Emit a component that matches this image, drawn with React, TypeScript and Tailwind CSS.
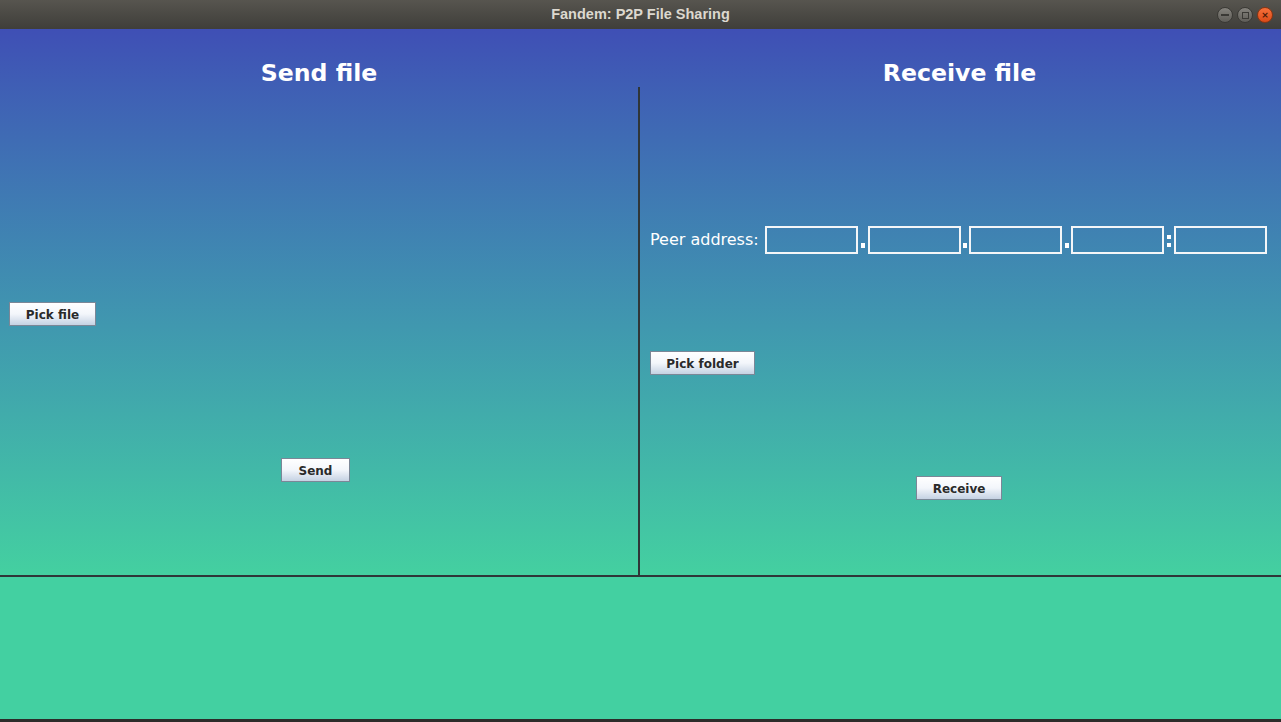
import React from "react";

function SwingButton({ label, className }: { label: string; className?: string }) {
    return (
        <button
            className={
                "h-[24px] pt-[2px] border border-[#7b8797] bg-gradient-to-b from-white via-[#f3f6fb] to-[#c5d2e3] text-[12px] font-bold text-[#2a2a2a] leading-none " +
                (className ?? "")
            }
        >
            {label}
        </button>
    );
}

function Field() {
    return <div className="w-[93px] h-[28px] border-2 border-[#f4f6f8] shrink-0" />;
}

function Dot({ w }: { w: string }) {
    return (
        <div className={"h-[28px] flex items-end justify-center pb-[6px] shrink-0 " + w}>
            <div className="w-[4px] h-[5px] bg-white" />
        </div>
    );
}

function Colon() {
    return (
        <div className="w-[10px] h-[28px] flex flex-col items-center justify-end gap-[4px] pb-[7px] shrink-0">
            <div className="w-[4px] h-[4px] bg-white" />
            <div className="w-[4px] h-[4px] bg-white" />
        </div>
    );
}

export default function App() {
    return (
        <div className="w-[1281px] h-[722px] flex flex-col overflow-hidden font-['DejaVu_Sans',sans-serif]">
            {/* Window title bar */}
            <div className="h-[29px] shrink-0 relative flex items-center justify-center bg-gradient-to-b from-[#57554f] to-[#3f3e3a]">
                <span className="text-[14.5px] font-bold text-[#dcd8cf] font-['Liberation_Sans',sans-serif]">
                    Fandem: P2P File Sharing
                </span>
                <div className="absolute right-[8px] top-[7px] flex gap-[4px]">
                    <div className="w-[16px] h-[16px] rounded-full bg-gradient-to-b from-[#85837d] to-[#5f5d58] border border-[#3a3935] flex items-center justify-center">
                        <div className="w-[8px] h-[2px] bg-[#3a3935]" />
                    </div>
                    <div className="w-[16px] h-[16px] rounded-full bg-gradient-to-b from-[#85837d] to-[#5f5d58] border border-[#3a3935] flex items-center justify-center">
                        <div className="w-[7px] h-[7px] border border-[#3a3935]" />
                    </div>
                    <div className="w-[16px] h-[16px] rounded-full bg-gradient-to-b from-[#f6703a] to-[#dc4a16] border border-[#8a3512] flex items-center justify-center text-[9px] leading-none text-[#4a1a08] font-bold">
                        ×
                    </div>
                </div>
            </div>

            {/* Main panel */}
            <div className="h-[546px] shrink-0 flex flex-col bg-gradient-to-b from-[#3f4fb5] to-[#44d0a0]">
                <div className="h-[58px] shrink-0 flex pt-[31px]">
                    <h2 className="w-[638px] text-center text-[23.6px] font-bold text-white leading-[27px]">Send file</h2>
                    <h2 className="flex-1 text-center text-[23.6px] font-bold text-white leading-[27px]">Receive file</h2>
                </div>
                <div className="flex-1 flex">
                    {/* Send side */}
                    <div className="w-[638px] flex flex-col items-start pt-[215px] pl-[9px]">
                        <SwingButton label="Pick file" className="w-[87px]" />
                        <SwingButton label="Send" className="w-[69px] mt-[132px] ml-[272px]" />
                    </div>
                    <div className="w-[2px] bg-[#2f3638]" />
                    {/* Receive side */}
                    <div className="flex-1 flex flex-col items-start pt-[139px] pl-[10px]">
                        <div className="flex items-center">
                            <span className="w-[115px] text-[16px] text-white leading-none">Peer address:</span>
                            <Field />
                            <Dot w="w-[10px]" />
                            <Field />
                            <Dot w="w-[8px]" />
                            <Field />
                            <Dot w="w-[9px]" />
                            <Field />
                            <Colon />
                            <Field />
                        </div>
                        <SwingButton label="Pick folder" className="w-[105px] mt-[97px]" />
                        <SwingButton label="Receive" className="w-[86px] mt-[101px] ml-[266px]" />
                    </div>
                </div>
            </div>

            <div className="h-[2px] shrink-0 bg-[#2f3638]" />

            {/* Bottom panel */}
            <div className="h-[142px] shrink-0 bg-[#43d0a1]" />
            <div className="h-[3px] shrink-0 bg-[#2c2c2a]" />
        </div>
    );
}
